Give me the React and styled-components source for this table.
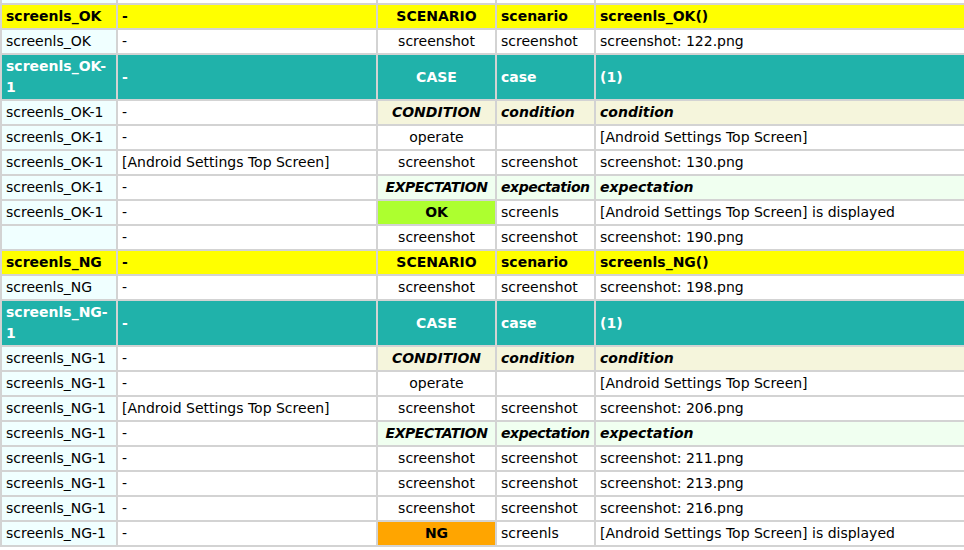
import React from "react";
import styled, { createGlobalStyle, css } from "styled-components";

const Global = createGlobalStyle`
  html, body {
    margin: 0;
    padding: 0;
    background: #ffffff;
    overflow: hidden;
  }
  body {
    font-family: "DejaVu Sans", "Noto Sans CJK JP", sans-serif;
    font-size: 14px;
    color: #000;
  }
`;

const Page = styled.div`
  width: 964px;
  height: 550px;
  overflow: hidden;
`;

const Table = styled.table`
  table-layout: fixed;
  border-collapse: separate;
  border-spacing: 2px;
  background: #d3d3d3;
  width: 1196px;
  margin-top: -22px;
`;

const ROW_BG = {
  scenario: "#ffff00",
  case: "#20b2aa",
};

const TAIL_BG = {
  condition: "#f5f5dc",
  expectation: "#f0fff0",
};

const JUDGE_BG = {
  OK: "#adff2f",
  NG: "#ffa500",
};

const cellBg = ({ $kind, $col, $judge }) => {
  if (ROW_BG[$kind]) return ROW_BG[$kind];
  if ($col === 0) return "#f0ffff";
  if ($col === 2 && $judge) return JUDGE_BG[$judge];
  if ($col >= 2 && TAIL_BG[$kind]) return TAIL_BG[$kind];
  return "#ffffff";
};

const Cell = styled.td`
  height: 21px;
  padding: 1px 4px;
  line-height: 21px;
  vertical-align: middle;
  white-space: normal;
  overflow: visible;
  background: ${cellBg};
  text-align: ${({ $col }) => ($col === 2 ? "center" : "left")};
  color: ${({ $kind }) => ($kind === "case" ? "#ffffff" : "#000000")};
  ${({ $kind }) =>
    ($kind === "scenario" || $kind === "case") &&
    css`
      font-weight: bold;
    `}
  ${({ $kind, $col }) =>
    ($kind === "condition" || $kind === "expectation") &&
    $col >= 2 &&
    css`
      font-weight: bold;
      font-style: italic;
    `}
  ${({ $kind, $col }) =>
    $kind === "expectation" &&
    ($col === 2 || $col === 3) &&
    css`
      letter-spacing: -0.45px;
    `}
  ${({ $judge }) =>
    $judge &&
    css`
      font-weight: bold;
    `}
`;

const rows = [
  { kind: "plain", cells: ["", "", "", "", ""] },
  { kind: "scenario", cells: ["screenls_OK", "-", "SCENARIO", "scenario", "screenls_OK()"] },
  { kind: "plain", cells: ["screenls_OK", "-", "screenshot", "screenshot", "screenshot: 122.png"] },
  { kind: "case", cells: ["screenls_OK-1", "-", "CASE", "case", "(1)"] },
  { kind: "condition", cells: ["screenls_OK-1", "-", "CONDITION", "condition", "condition"] },
  { kind: "plain", cells: ["screenls_OK-1", "-", "operate", "", "[Android Settings Top Screen]"] },
  { kind: "plain", cells: ["screenls_OK-1", "[Android Settings Top Screen]", "screenshot", "screenshot", "screenshot: 130.png"] },
  { kind: "expectation", cells: ["screenls_OK-1", "-", "EXPECTATION", "expectation", "expectation"] },
  { kind: "plain", judge: "OK", cells: ["screenls_OK-1", "-", "OK", "screenls", "[Android Settings Top Screen] is displayed"] },
  { kind: "plain", cells: ["", "-", "screenshot", "screenshot", "screenshot: 190.png"] },
  { kind: "scenario", cells: ["screenls_NG", "-", "SCENARIO", "scenario", "screenls_NG()"] },
  { kind: "plain", cells: ["screenls_NG", "-", "screenshot", "screenshot", "screenshot: 198.png"] },
  { kind: "case", cells: ["screenls_NG-1", "-", "CASE", "case", "(1)"] },
  { kind: "condition", cells: ["screenls_NG-1", "-", "CONDITION", "condition", "condition"] },
  { kind: "plain", cells: ["screenls_NG-1", "-", "operate", "", "[Android Settings Top Screen]"] },
  { kind: "plain", cells: ["screenls_NG-1", "[Android Settings Top Screen]", "screenshot", "screenshot", "screenshot: 206.png"] },
  { kind: "expectation", cells: ["screenls_NG-1", "-", "EXPECTATION", "expectation", "expectation"] },
  { kind: "plain", cells: ["screenls_NG-1", "-", "screenshot", "screenshot", "screenshot: 211.png"] },
  { kind: "plain", cells: ["screenls_NG-1", "-", "screenshot", "screenshot", "screenshot: 213.png"] },
  { kind: "plain", cells: ["screenls_NG-1", "-", "screenshot", "screenshot", "screenshot: 216.png"] },
  { kind: "plain", judge: "NG", cells: ["screenls_NG-1", "-", "NG", "screenls", "[Android Settings Top Screen] is displayed"] },
];

const widths = [106, 250, 109, 89, 590];

const Col = styled.col`
  width: ${({ $w }) => $w}px;
`;

export default function App() {
  return (
    <Page>
      <Global />
      <Table>
        <colgroup>
          {widths.map((w, i) => (
            <Col key={i} $w={w + 8} />
          ))}
        </colgroup>
        <tbody>
          {rows.map((row, r) => (
            <tr key={r}>
              {row.cells.map((text, c) => (
                <Cell
                  key={c}
                  $kind={row.kind}
                  $col={c}
                  $judge={c === 2 ? row.judge : undefined}
                >
                  {text}
                </Cell>
              ))}
            </tr>
          ))}
        </tbody>
      </Table>
    </Page>
  );
}
